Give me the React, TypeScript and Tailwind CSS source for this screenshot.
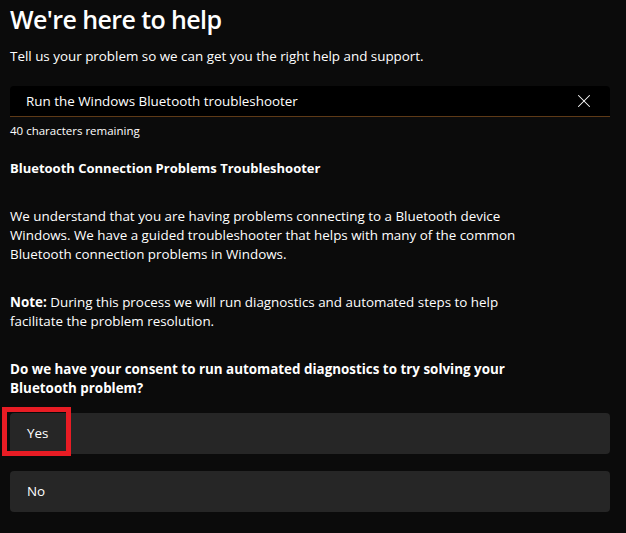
import { X } from 'lucide-react';

export default function App() {
  return (
    <div
      className="min-h-[533px] w-full bg-[#0b0b0b] text-white"
      style={{ fontFamily: '"Open Sans", "Noto Sans", sans-serif' }}
    >
      <div className="pl-[10px] pr-[16px] pt-[2px]">
        {/* Header */}
        <h1 className="text-[25px] font-semibold leading-[34px] tracking-[-0.6px]">We're here to help</h1>
        <p className="mt-[11px] text-[13.4px] leading-[19px]">
          Tell us your problem so we can get you the right help and support.
        </p>

        {/* Search box */}
        <div className="mt-[20px] flex h-[31px] items-center justify-between rounded-t-[4px] border-b border-[#5e3a17] bg-black pl-[16px] pr-[15px]">
          <span className="text-[13.4px]">Run the Windows Bluetooth troubleshooter</span>
          <X className="h-[22px] w-[22px]" strokeWidth={1.1} />
        </div>
        <p className="mt-[6px] text-[11.5px] leading-[16px]">40 characters remaining</p>

        {/* Troubleshooter content */}
        <div className="max-w-[530px]">
          <h2 className="mt-[20px] text-[13px] font-bold leading-[19px]">
            Bluetooth Connection Problems Troubleshooter
          </h2>
          <p className="mt-[29px] text-[13.4px] leading-[19px]">
            We understand that you are having problems connecting to a Bluetooth device Windows. We have a
            guided troubleshooter that helps with many of the common Bluetooth connection problems in Windows.
          </p>
          <p className="mt-[29px] text-[13.4px] leading-[19px]">
            <strong className="font-bold">Note:</strong> During this process we will run diagnostics and
            automated steps to help facilitate the problem resolution.
          </p>
          <p className="mt-[29px] text-[13.4px] font-bold leading-[19px]">
            Do we have your consent to run automated diagnostics to try solving your Bluetooth problem?
          </p>
        </div>

        {/* Answers */}
        <div className="mt-[15px] flex flex-col gap-[17px]">
          <div className="relative">
            <button className="flex h-[41px] w-full items-center rounded-[4px] bg-[#262626] px-[17px] text-left text-[13.4px]">
              Yes
            </button>
            <div className="pointer-events-none absolute -left-[8px] -top-[6px] h-[49px] w-[69px] border-[5px] border-[#e81c24]" />
          </div>
          <button className="flex h-[41px] w-full items-center rounded-[4px] bg-[#262626] px-[17px] text-left text-[13.4px]">
            No
          </button>
        </div>
      </div>
    </div>
  );
}
